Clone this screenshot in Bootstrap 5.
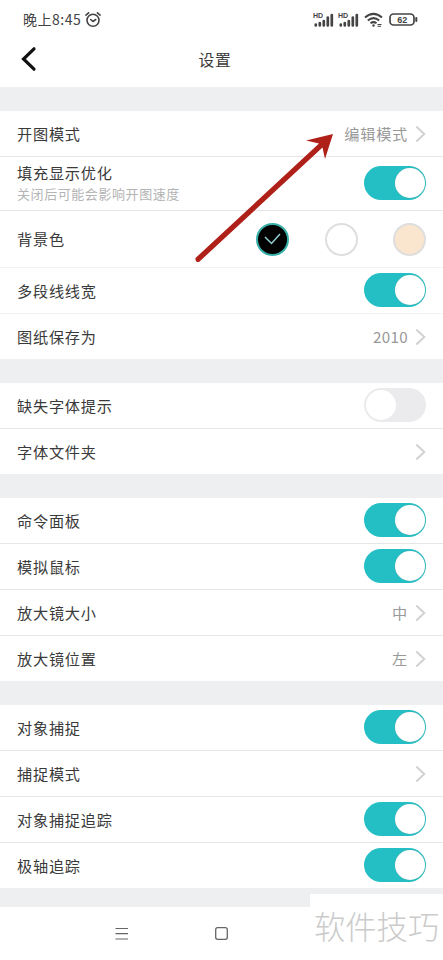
<!DOCTYPE html>
<html lang="zh-CN">
<head>
<meta charset="utf-8">
<meta name="viewport" content="width=device-width, initial-scale=1">
<title>设置</title>
<link rel="stylesheet" href="https://cdn.jsdelivr.net/npm/bootstrap@5.3.0/dist/css/bootstrap.min.css">
<style>
  body { font-family: "Noto Sans CJK SC", sans-serif; font-size: 15.2px; letter-spacing: .75px; line-height: 22px; color: #3a3a3a; background: #eeeff0; overflow: hidden; }
  .screen { width: 443px; height: 960px; }
  .status { height: 38px; padding: 2px 25px 0 23px; color: #444; }
  .clock { font-size: 14px; letter-spacing: .5px; padding-bottom: 2px; }
  .signal-two { margin-left: 3px; }
  .wifi { margin-left: 4px; }
  .battery { margin-left: 5px; }
  .title-bar { height: 49px; padding: 0 13px 6px 0; font-size: 15.8px; }
  .back { left: 20px; top: 8px; }
  .group { margin-top: 24px; }
  .setting { height: 46px; padding: 0 17px; border: 0; border-bottom: 1px solid #e6e6e8; color: #3a3a3a; background: #fff; }
  .setting:last-child { height: 45px; border-bottom: 0; }
  .setting-soft { border-bottom-color: #f3f3f4; }
  .setting-note { height: 54px; }
  .setting-colors { height: 57px; }
  .label, .value { padding-bottom: 2px; }
  .note-title { margin-top: -1px; }
  .note { font-size: 13px; letter-spacing: .57px; line-height: 22px; color: #b4b4b4; }
  .value { color: #999; margin-right: 7px; }
  .value-year { letter-spacing: .3px; }
  .toggle { width: 62px; height: 34px; padding: 2px 1.5px; margin-bottom: 1px; background: #23bfc5; }
  .toggle::after { content: ""; width: 30px; height: 30px; border-radius: 50%; background: #fff; margin-left: auto; box-shadow: 0 0 1px #6e9c98; }
  .toggle-off { background: #ebebed; }
  .toggle-off::after { margin-left: .5px; box-shadow: none; }
  .swatches { gap: 35.5px; }
  .swatch { width: 33px; height: 33px; border: 2px solid #dedede; background: #fff; }
  .swatch-black { background: #000; border-color: #36afa8; }
  .swatch-cream { background: #fae6cf; }
  .nav-strip { height: 53px; }
  .nav-menu { margin-left: 115px; }
  .nav-home { margin-left: 85px; }
  .brand-box { width: 133px; height: 66px; font-size: 31.3px; font-weight: 300; letter-spacing: 0; line-height: 63px; padding-left: 4px; color: #cbcbcb; }
  .pointer { left: 190px; top: 128px; }
</style>
<script src="https://cdn.jsdelivr.net/npm/bootstrap@5.3.0/dist/js/bootstrap.bundle.min.js"></script>
</head>
<body>
<svg class="d-none">
  <symbol id="chev" viewBox="0 0 11 18"><path d="M1.3 1.5 9.3 9 1.3 16.5" fill="none" stroke="#d2d2d2" stroke-width="2"/></symbol>
  <symbol id="signal" viewBox="0 0 22 16">
    <text x="0" y="6" font-family="Liberation Sans, sans-serif" font-size="7" font-weight="bold" letter-spacing="0" fill="#444">HD</text>
    <path d="M2.8 13.500v-1M6.800 13.500v-2.500M10.800 13.500V9M14.800 13.500V5.500M18.800 13.500V3" stroke="#444" stroke-width="2.700" stroke-linecap="round"/>
  </symbol>
</svg>
<div class="screen position-relative d-flex flex-column overflow-hidden">
  <header class="bg-white">
    <div class="status d-flex align-items-center">
      <span class="clock">晚上8:45</span>
      <svg class="ms-1" width="16" height="16" viewBox="0 0 16 16" fill="none" stroke="#444" stroke-width="1.6" stroke-linecap="round"><circle cx="8" cy="8.200" r="6"/><path d="m5.700 7.500 2.300 2 2.700-2M.9 3.100 3.600.8M15.100 3.100 12.400.8"/></svg>
      <span class="d-flex align-items-center ms-auto">
        <svg width="22" height="16"><use href="#signal"/></svg>
        <svg class="signal-two" width="22" height="16"><use href="#signal"/></svg>
        <svg class="wifi" width="20" height="16" viewBox="0 0 20 16" fill="none" stroke="#444" stroke-width="2"><path d="M1 5.500Q9.500-1.800 18 5.500M3.800 8.500q5.700-4.700 11.400 0M6.500 11.300q3-2.300 6 0"/><circle cx="9.500" cy="13.500" r="1.200" fill="#444" stroke="none"/><path d="M13.500 12.500h4M13.500 14.200h3.500" stroke-width="1.100"/></svg>
        <svg class="battery" width="29" height="14" viewBox="0 0 29 14"><rect x="1" y="1" width="24" height="11" rx="3.500" fill="none" stroke="#444" stroke-width="1.700"/><path d="M27.300 5v3" stroke="#444" stroke-width="2" stroke-linecap="round"/><text x="13.200" y="9.800" text-anchor="middle" font-family="Liberation Sans, sans-serif" font-size="9" font-weight="bold" letter-spacing="0" fill="#444">62</text></svg>
      </span>
    </div>
    <div class="title-bar position-relative d-flex align-items-center justify-content-center">
      <svg class="back position-absolute" width="18" height="26" viewBox="0 0 18 26" fill="none" stroke="#111" stroke-width="3.200" stroke-linecap="round"><path d="M14 2.800 3.500 13 14 23.200"/></svg>
      <span>设置</span>
    </div>
  </header>

  <div class="group list-group list-group-flush">
    <div class="setting d-flex align-items-center"><span class="label">开图模式</span><span class="value ms-auto">编辑模式</span><svg width="11" height="18"><use href="#chev"/></svg></div>
    <div class="setting setting-note d-flex align-items-center"><div><div class="note-title">填充显示优化</div><div class="note">关闭后可能会影响开图速度</div></div><span class="toggle rounded-pill d-flex ms-auto"></span></div>
    <div class="setting setting-colors setting-soft d-flex align-items-center"><span class="label">背景色</span>
      <span class="swatches d-flex ms-auto">
        <span class="swatch swatch-black rounded-circle d-flex align-items-center justify-content-center"><svg width="17" height="12" viewBox="0 0 17 12" fill="none" stroke="#8fcfd3" stroke-width="1.500"><path d="m1 4 6.500 6.500L16 1"/></svg></span>
        <span class="swatch rounded-circle"></span>
        <span class="swatch swatch-cream rounded-circle"></span>
      </span></div>
    <div class="setting setting-soft d-flex align-items-center"><span class="label">多段线线宽</span><span class="toggle rounded-pill d-flex ms-auto"></span></div>
    <div class="setting d-flex align-items-center"><span class="label">图纸保存为</span><span class="value value-year ms-auto">2010</span><svg width="11" height="18"><use href="#chev"/></svg></div>
  </div>

  <div class="group list-group list-group-flush">
    <div class="setting d-flex align-items-center"><span class="label">缺失字体提示</span><span class="toggle toggle-off rounded-pill d-flex ms-auto"></span></div>
    <div class="setting d-flex align-items-center"><span class="label">字体文件夹</span><svg class="ms-auto" width="11" height="18"><use href="#chev"/></svg></div>
  </div>

  <div class="group list-group list-group-flush">
    <div class="setting d-flex align-items-center"><span class="label">命令面板</span><span class="toggle rounded-pill d-flex ms-auto"></span></div>
    <div class="setting d-flex align-items-center"><span class="label">模拟鼠标</span><span class="toggle rounded-pill d-flex ms-auto"></span></div>
    <div class="setting d-flex align-items-center"><span class="label">放大镜大小</span><span class="value ms-auto">中</span><svg width="11" height="18"><use href="#chev"/></svg></div>
    <div class="setting d-flex align-items-center"><span class="label">放大镜位置</span><span class="value ms-auto">左</span><svg width="11" height="18"><use href="#chev"/></svg></div>
  </div>

  <div class="group list-group list-group-flush">
    <div class="setting d-flex align-items-center"><span class="label">对象捕捉</span><span class="toggle rounded-pill d-flex ms-auto"></span></div>
    <div class="setting d-flex align-items-center"><span class="label">捕捉模式</span><svg class="ms-auto" width="11" height="18"><use href="#chev"/></svg></div>
    <div class="setting d-flex align-items-center"><span class="label">对象捕捉追踪</span><span class="toggle rounded-pill d-flex ms-auto"></span></div>
    <div class="setting d-flex align-items-center"><span class="label">极轴追踪</span><span class="toggle rounded-pill d-flex ms-auto"></span></div>
  </div>

  <footer class="nav-strip mt-auto bg-white d-flex align-items-center">
    <svg class="nav-menu" width="14" height="14" viewBox="0 0 14 14" stroke="#666" stroke-width="1.200"><path d="M.5 1.500h12.500M.5 6.700h12.500M.5 12h12.500"/></svg>
    <svg class="nav-home" width="15" height="15" viewBox="0 0 15 15" fill="none" stroke="#666" stroke-width="1.300"><rect x="1.700" y="1.700" width="11.600" height="11.600" rx="2"/></svg>
  </footer>
  <div class="brand-box position-absolute bottom-0 end-0 bg-white text-nowrap">软件技巧</div>

  <svg class="pointer position-absolute" width="148" height="138" viewBox="190 128 148 138">
    <path d="M195.500 258 319 143.500 306 140.500 333 134 325 159 322.500 147.500 199 262Q195 262.500 195.500 258Z" fill="#ae2018"/>
  </svg>
</div>
</body>
</html>
